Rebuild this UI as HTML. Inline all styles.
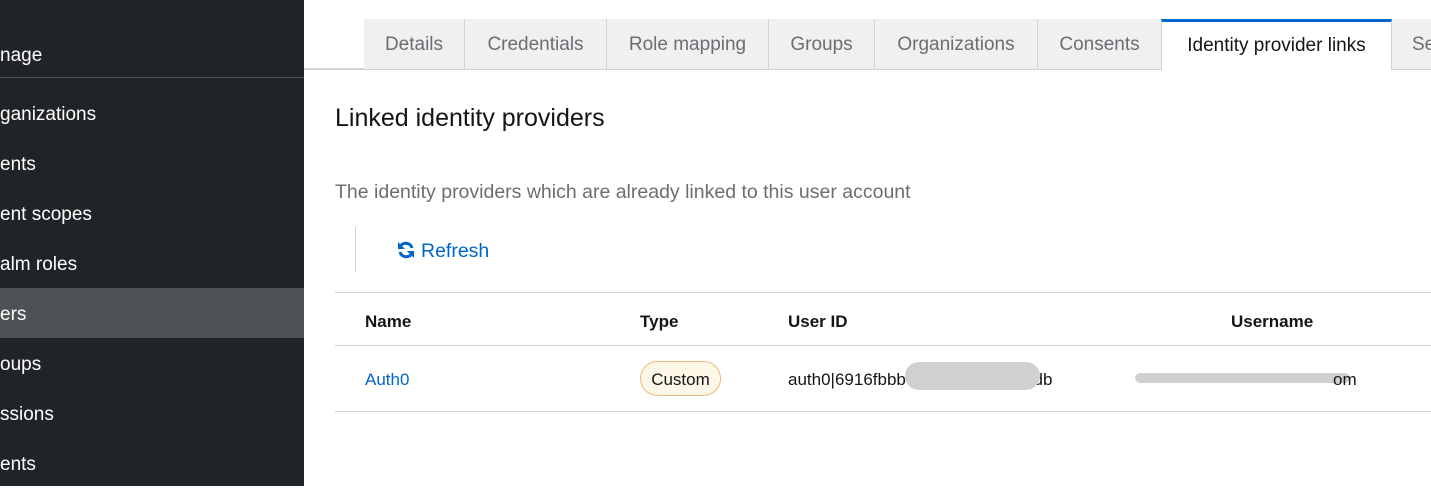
<!DOCTYPE html>
<html><head><style>
*{margin:0;padding:0;box-sizing:border-box}
body{width:1431px;height:486px;overflow:hidden;font-family:"Liberation Sans",sans-serif;background:#fff;position:relative;color:#151515}
.sb{position:absolute;left:0;top:0;width:304px;height:486px;background:#212427;color:#fff;font-size:19px}
.sb div{position:absolute;left:0;width:304px;height:50px;line-height:54px;white-space:nowrap}
.tabs{position:absolute;left:304px;top:0;right:0;height:70px;border-bottom:2px solid #d2d2d2}
.tab{position:absolute;top:19px;height:50px;line-height:52px;background:#f0f0f0;border-right:1px solid #d2d2d2;color:#6a6e73;font-size:19px;text-align:center;white-space:nowrap;overflow:hidden}
.tab.a{background:#fff;color:#151515;border-top:3px solid #0066cc;line-height:48px;height:51px;border-left:1px solid #d2d2d2}
.t{position:absolute;white-space:nowrap}
.hl{position:absolute;left:335px;right:0;height:1px;background:#d2d2d2}
</style></head><body>
<div class="sb">
<div style="top:29px">nage</div>
<div style="top:77px;height:1px;background:#4f5255"></div>
<div style="top:88px">ganizations</div>
<div style="top:138px">ents</div>
<div style="top:188px">ent scopes</div>
<div style="top:238px">alm roles</div>
<div style="top:288px;background:#4f5255">ers</div>
<div style="top:338px">oups</div>
<div style="top:388px">ssions</div>
<div style="top:438px">ents</div>
</div>
<div class="tabs">
<div class="tab" style="left:60px;width:101px">Details</div>
<div class="tab" style="left:161px;width:142px">Credentials</div>
<div class="tab" style="left:303px;width:162px">Role mapping</div>
<div class="tab" style="left:465px;width:106px">Groups</div>
<div class="tab" style="left:571px;width:163px">Organizations</div>
<div class="tab" style="left:734px;width:124px">Consents</div>
<div class="tab a" style="left:857px;width:231px">Identity provider links</div>
<div class="tab" style="left:1088px;width:60px;text-align:left;padding-left:20px">Se</div>
</div>
<div class="t" style="left:335px;top:104px;font-size:25px">Linked identity providers</div>
<div class="t" style="left:335px;top:181px;font-size:19.5px;color:#6a6e73">The identity providers which are already linked to this user account</div>
<div style="position:absolute;left:355px;top:227px;width:1px;height:45px;background:#d2d2d2"></div>
<svg style="position:absolute;left:396px;top:240px" width="20" height="20" viewBox="0 0 20 20"><path d="M16 8A6.5 6.5 0 0 0 4.5 6" stroke="#0066cc" stroke-width="3" fill="none"/><path d="M2 2v7h7z" fill="#0066cc"/><path d="M4 12a6.5 6.5 0 0 0 11.5 2" stroke="#0066cc" stroke-width="3" fill="none"/><path d="M18 18v-7h-7z" fill="#0066cc"/></svg>
<div class="t" style="left:421px;top:240px;font-size:19.5px;color:#0066cc">Refresh</div>
<div class="hl" style="top:292px"></div>
<div class="t" style="left:365px;top:312px;font-size:17px;font-weight:bold">Name</div>
<div class="t" style="left:640px;top:312px;font-size:17px;font-weight:bold">Type</div>
<div class="t" style="left:788px;top:312px;font-size:17px;font-weight:bold">User ID</div>
<div class="t" style="left:1231px;top:312px;font-size:17px;font-weight:bold">Username</div>
<div class="hl" style="top:345px"></div>
<div class="t" style="left:365px;top:370px;font-size:17px;color:#0066cc">Auth0</div>
<div class="t" style="left:640px;top:361px;height:35px;width:81px;border:1px solid #f4b678;background:#fdf7e7;border-radius:18px;font-size:17px;text-align:center;line-height:35px">Custom</div>
<div class="t" style="left:788px;top:370px;font-size:17px">auth0|6916fbbb9b5602916f3e0bdb</div>
<div style="position:absolute;left:905px;top:362px;width:135px;height:28px;background:#d0d0d0;border-radius:14px"></div>
<div style="position:absolute;left:1135px;top:373px;width:215px;height:10px;background:#d0d0d0;border-radius:5px"></div>
<div class="t" style="left:1333px;top:370px;font-size:17px">om</div>
<div class="hl" style="top:411px"></div>
</body></html>
